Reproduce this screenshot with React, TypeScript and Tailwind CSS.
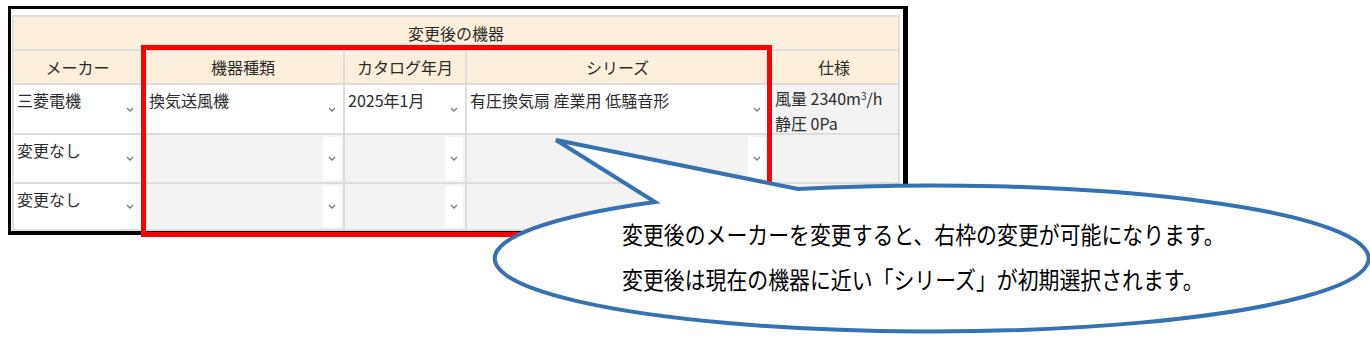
const jp = "font-['Noto_Sans_CJK_JP','Noto_Sans',sans-serif]";

const Chevron = () => (
  <svg width="8" height="5" viewBox="0 0 8 5">
    <path d="M1 1 L4 4 L7 1" fill="none" stroke="#7a7a7a" strokeWidth="1.3" />
  </svg>
);

const Head = ({ label, span }: { label: string; span?: boolean }) => (
  <div
    className={
      span
        ? "col-span-5 bg-[#fcf0dd] flex items-center justify-center text-[16px] text-[#2b2b2b]"
        : "bg-[#fcf0dd] flex items-center justify-center text-[16px] text-[#2b2b2b]"
    }
  >
    {label}
  </div>
);

const Select = ({
  text,
  disabled,
  pad = "pl-[3px]",
}: {
  text?: string;
  disabled?: boolean;
  pad?: string;
}) => (
  <div className={disabled ? "flex bg-[#f3f3f3]" : "flex bg-white"}>
    <div className={`flex-1 pt-[3px] text-[16px] leading-[24px] text-[#2b2b2b] ${pad}`}>{text}</div>
    <div
      className={
        disabled
          ? "w-[18px] my-[2px] mr-[2px] bg-white flex items-center justify-center"
          : "w-[18px] my-[2px] mr-[2px] flex items-center justify-center"
      }
    >
      <Chevron />
    </div>
  </div>
);

export default function App() {
  return (
    <div className={`relative w-[1370px] h-[343px] bg-white overflow-hidden ${jp}`}>
      {/* table frame */}
      <div className="ml-[8px] mt-[6px] w-[900px] border-l-[3px] border-t-[3px] border-r-[5px] border-b-[4px] border-black pt-[6px] pl-[1px] pr-[3px]">
        <div className="grid grid-cols-[127px_200px_120px_301px_128px] grid-rows-[32px_32px_48px_47px_45px] gap-[2px] p-[2px] bg-[#dddddd]">
          <Head label="変更後の機器" span />
          <Head label="メーカー" />
          <Head label="機器種類" />
          <Head label="カタログ年月" />
          <Head label="シリーズ" />
          <Head label="仕様" />

          <Select text="三菱電機" />
          <Select text="換気送風機" pad="pl-[6px]" />
          <Select text="2025年1月" />
          <Select text="有圧換気扇 産業用 低騒音形" />
          <div className="bg-[#f3f3f3] pl-[5px] pt-[1px] text-[16px] leading-[25px] text-[#2b2b2b]">
            <div>
              風量 2340m<sup className="text-[10px]">3</sup>/h
            </div>
            <div>静圧 0Pa</div>
          </div>

          <Select text="変更なし" />
          <Select disabled />
          <Select disabled />
          <Select disabled />
          <div className="bg-[#f3f3f3]" />

          <Select text="変更なし" />
          <Select disabled />
          <Select disabled />
          <Select disabled />
          <div className="bg-[#f3f3f3]" />
        </div>
      </div>

      {/* red highlight */}
      <div className="absolute left-[141px] top-[45px] w-[631px] h-[192px] border-[5px] border-[#ff0000]" />

      {/* callout */}
      <svg className="absolute left-0 top-0" width="1370" height="343" viewBox="0 0 1370 343">
        <path
          d="M655 202 L556 140 L798 189 A437 73 0 1 1 655 202 Z"
          fill="#ffffff"
          stroke="#3671b1"
          strokeWidth="4"
          strokeLinejoin="miter"
        />
      </svg>
      <div className="absolute left-[622px] top-[211px] text-[24px] leading-[45px] text-black whitespace-nowrap origin-left scale-x-[0.87]">
        <div>変更後のメーカーを変更すると、右枠の変更が可能になります。</div>
        <div>変更後は現在の機器に近い「シリーズ」が初期選択されます。</div>
      </div>
    </div>
  );
}
